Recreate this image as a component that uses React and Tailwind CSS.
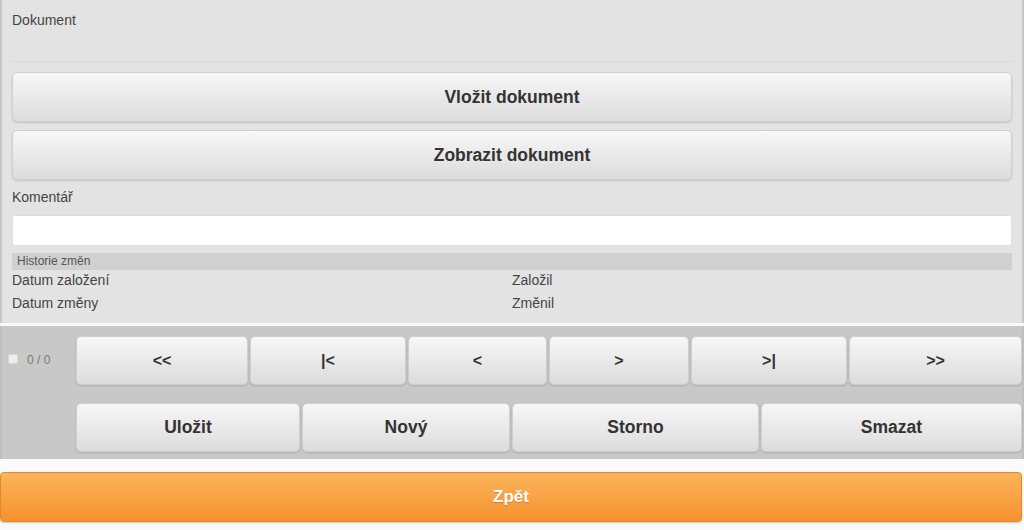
import React from "react";

const font = { fontFamily: '"Liberation Sans", Arial, sans-serif' };

const greyBtn =
  "flex items-center justify-center rounded-[5px] border border-[#cfcfcf] bg-gradient-to-b from-[#f7f7f7] to-[#dcdcdc] font-bold text-[#333] shadow-[0_1px_2px_rgba(0,0,0,0.15)]";

const navRow = [
  { label: "<<", w: "w-[172px]" },
  { label: "|<", w: "w-[156px]" },
  { label: "<", w: "w-[139px]" },
  { label: ">", w: "w-[140px]" },
  { label: ">|", w: "w-[156px]" },
  { label: ">>", w: "w-[173px]" },
];

const actionRow = [
  { label: "Uložit", w: "w-[224px]" },
  { label: "Nový", w: "w-[208px]" },
  { label: "Storno", w: "w-[247px]" },
  { label: "Smazat", w: "w-[261px]" },
];

export default function App() {
  return (
    <div style={font} className="h-[530px] w-[1024px] overflow-hidden bg-[#fafafa] text-[#333]">
      {/* form panel */}
      <div className="h-[323px] w-[1024px] border-x-2 border-[#c6c6c6] bg-[#e3e3e3] px-[10px]">
        <div className="h-[62px] border-b border-[#dadada] pt-[10px] text-[14px] text-[#444]">Dokument</div>
        <div className="flex flex-col gap-[8px] pt-[10px]">
          <button className={`${greyBtn} h-[50px] w-full text-[17.5px]`}>Vložit dokument</button>
          <button className={`${greyBtn} h-[50px] w-full text-[17.5px]`}>Zobrazit dokument</button>
        </div>
        <div className="pt-[8px] text-[14px] leading-[18px] text-[#444]">Komentář</div>
        <div className="mt-[9px] h-[31px] w-full rounded-[3px] border border-[#dddddd] bg-white" />
        <div className="mt-[7px] h-[17px] w-full bg-[#d0d0d0] pl-[5px] text-[12px] leading-[17px] text-[#555]">
          Historie změn
        </div>
        <div className="-mt-[1px] grid grid-cols-2 text-[14px] leading-[23px] text-[#444]">
          <div>Datum založení</div>
          <div>Založil</div>
          <div>Datum změny</div>
          <div>Změnil</div>
        </div>
      </div>

      {/* toolbar */}
      <div className="mt-[3px] flex h-[133px] w-[1024px] border-x-2 border-[#c0c0c0] bg-[#c8c8c8]">
        <div className="flex w-[74px] shrink-0 items-start gap-[9px] pl-[6px] pt-[28px]">
          <span className="h-[10px] w-[10px] rounded-[2px] border border-[#d6d6d6] bg-[#eeeeee]" />
          <span className="text-[12px] leading-[12px] text-[#777]">0 / 0</span>
        </div>
        <div className="flex flex-col gap-[18px] pt-[10px]">
          <div className="flex gap-[2px]">
            {navRow.map((b) => (
              <button key={b.label} className={`${greyBtn} ${b.w} h-[49px] text-[16px]`}>
                {b.label}
              </button>
            ))}
          </div>
          <div className="flex gap-[2px]">
            {actionRow.map((b) => (
              <button key={b.label} className={`${greyBtn} ${b.w} h-[49px] text-[17.5px]`}>
                {b.label}
              </button>
            ))}
          </div>
        </div>
      </div>

      {/* back */}
      <div className="pt-[13px]">
        <button className="flex h-[50px] w-[1022px] items-center justify-center rounded-[4px] border border-[#e3892c] bg-gradient-to-b from-[#fbb45b] to-[#f6922c] text-[17px] font-bold text-white [text-shadow:0_1px_1px_rgba(0,0,0,0.2)] shadow-[0_1px_2px_rgba(0,0,0,0.2)]">
          Zpět
        </button>
      </div>
    </div>
  );
}
